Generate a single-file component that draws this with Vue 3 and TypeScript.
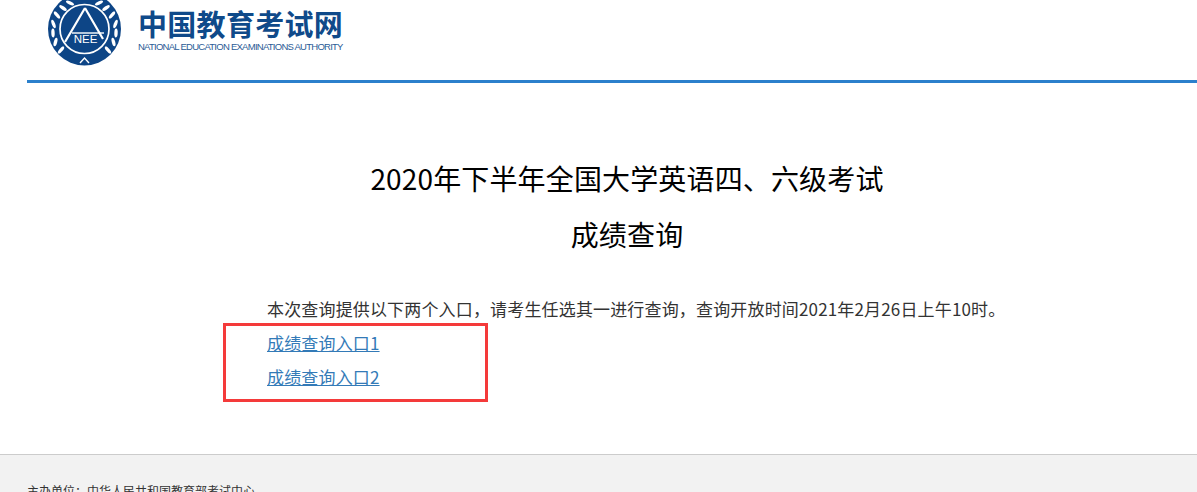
<script setup lang="ts">
const leaves = [
  { x: 13, y: 50, r: 130 },
  { x: 7.5, y: 42, r: 105 },
  { x: 5, y: 33, r: 88 },
  { x: 5.5, y: 24, r: 70 },
  { x: 9, y: 15, r: 50 },
  { x: 15, y: 8, r: 35 },
  { x: 22, y: 3, r: 25 },
]
</script>

<template>
  <div class="page">
    <div class="wrap">
      <header class="site-head">
        <svg class="logo" viewBox="0 0 73 66" width="73" height="66" aria-hidden="true">
          <circle cx="36.5" cy="29" r="36.5" fill="#0d4586" />
          <circle cx="36.5" cy="29" r="24.5" fill="none" stroke="#fff" stroke-width="1.7" />
          <g v-for="(leaf, i) in leaves" :key="i" fill="#fff">
            <ellipse rx="1.7" ry="4.4" :transform="`translate(${leaf.x} ${leaf.y}) rotate(${leaf.r - 90})`" />
            <ellipse rx="1.7" ry="4.4" :transform="`translate(${73 - leaf.x} ${leaf.y}) rotate(${90 - leaf.r})`" />
          </g>
          <path d="M37 8 L17 42 M37 8 L55 39" stroke="#fff" stroke-width="2.2" fill="none" />
          <path d="M24 33 H56" stroke="#fff" stroke-width="1.4" />
          <path d="M32 63 L36.5 58 L41 63" stroke="#fff" stroke-width="1.4" fill="none" />
          <text class="logo-nee" x="37.5" y="43" text-anchor="middle">NEE</text>
        </svg>
        <div class="brand">
          <div class="brand-name">中国教育考试网</div>
          <div class="brand-en">NATIONAL EDUCATION EXAMINATIONS AUTHORITY</div>
        </div>
      </header>

      <main class="content">
        <h1>2020年下半年全国大学英语四、六级考试</h1>
        <h1>成绩查询</h1>
        <div class="body">
          <p>本次查询提供以下两个入口&#65292;请考生任选其一进行查询&#65292;查询开放时间2021年2月26日上午10时。</p>
          <p><a href="#">成绩查询入口1</a></p>
          <p><a href="#">成绩查询入口2</a></p>
          <div class="mark"></div>
        </div>
      </main>
    </div>

    <footer class="site-foot">
      <div class="foot-line">主办单位&#65306;中华人民共和国教育部考试中心</div>
    </footer>
  </div>
</template>

<style>
html,
body {
  margin: 0;
  overflow: hidden;
  background: #fff;
}
</style>

<style scoped>
.page {
  height: 492px;
  overflow: hidden;
  display: flex;
  flex-direction: column;
  font-family: "Noto Sans CJK SC", "Liberation Sans", sans-serif;
  color: #333;
}

.wrap {
  width: 1200px;
  margin-left: 27px;
  flex: none;
}

.site-head {
  display: flex;
  height: 80px;
  padding-left: 21px;
  border-bottom: 3px solid #2b80cc;
}

.logo {
  display: block;
}

.brand {
  margin-left: 17px;
  padding-top: 6px;
}

.brand-name {
  font-size: 29px;
  line-height: 34px;
  font-weight: 700;
  letter-spacing: 0.3px;
  color: #0f4a8a;
  white-space: nowrap;
}

.brand-en {
  margin-top: 1px;
  font-family: "Liberation Sans", sans-serif;
  font-size: 9.5px;
  line-height: 12px;
  letter-spacing: -0.74px;
  color: #2b5b96;
  white-space: nowrap;
}

.logo-nee {
  font-family: "Liberation Sans", sans-serif;
  font-size: 11.5px;
  fill: #fff;
}

.content {
  padding-top: 67px;
  height: 304px;
}

h1 {
  margin: 0;
  font-size: 28px;
  line-height: 56px;
  font-weight: 400;
  letter-spacing: 0.15px;
  text-align: center;
  color: #000;
}

.body {
  position: relative;
  margin-top: 30px;
  padding-left: 240px;
  font-size: 17px;
  line-height: 34px;
  letter-spacing: 0.16px;
}

.body p {
  margin: 0;
  white-space: nowrap;
}

.body a {
  color: #337ab7;
  text-decoration: underline;
}

.mark {
  position: absolute;
  left: 196px;
  top: 31px;
  width: 259px;
  height: 73px;
  border: 3px solid #f43a3a;
}

.site-foot {
  flex: 1;
  background: #f2f2f2;
  border-top: 1px solid #ccc;
  padding: 27px 0 0 27px;
}

.foot-line {
  font-size: 12px;
  line-height: 18px;
  color: #333;
}
</style>
